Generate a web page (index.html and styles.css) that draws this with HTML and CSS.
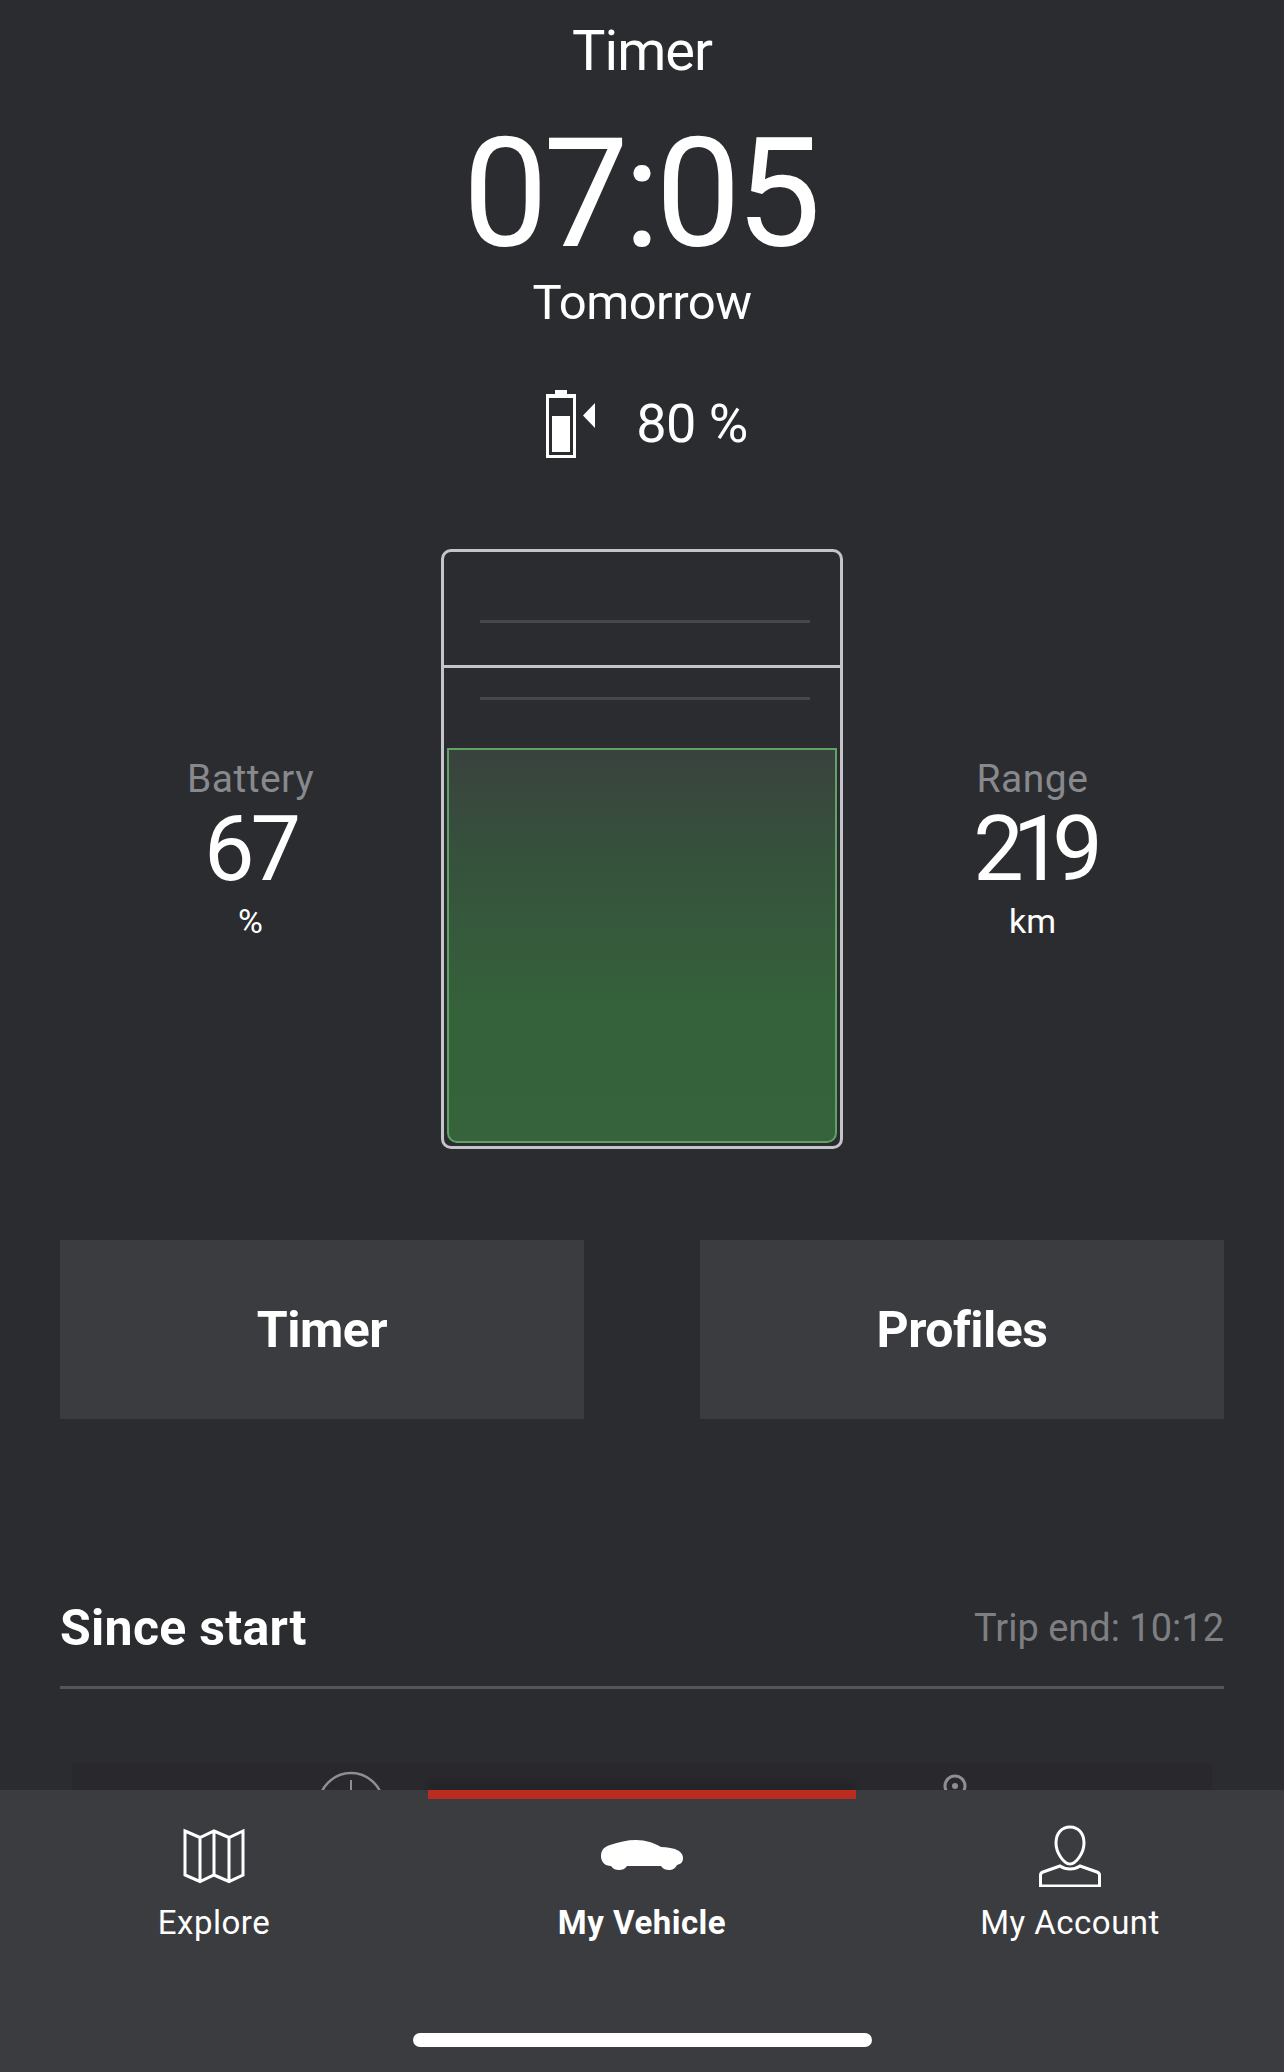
FILE: index.html
```html
<!DOCTYPE html>
<html lang="en">
<head>
<meta charset="utf-8">
<title>My Vehicle</title>
<link rel="stylesheet" href="styles.css">
</head>
<body>
<div class="screen">
  <main class="content">
    <section class="timer">
      <h1 class="timer-title">Timer</h1>
      <div class="timer-time">07:05</div>
      <div class="timer-day">Tomorrow</div>
      <div class="target">
        <svg class="target-icon" width="50" height="68" viewBox="0 0 50 68" aria-hidden="true">
          <path fill="#fff" d="M9 0h12v4h9v64h-30v-64h9z"/>
          <rect x="3" y="8" width="24" height="57" fill="#2b2c30"/>
          <rect x="6" y="26" width="18" height="36" fill="#fff"/>
          <path fill="#fff" d="M49 13v25l-12-12.500z"/>
        </svg>
        <span class="target-value">80 %</span>
      </div>
    </section>

    <section class="gauge-row">
      <div class="stat stat-left">
        <div class="stat-label">Battery</div>
        <div class="stat-value">67</div>
        <div class="stat-unit">%</div>
      </div>
      <div class="gauge">
        <div class="gauge-top"><div class="tick"></div></div>
        <div class="gauge-bottom">
          <div class="tick tick-low"></div>
          <div class="gauge-fill"></div>
        </div>
      </div>
      <div class="stat stat-right">
        <div class="stat-label">Range</div>
        <div class="stat-value stat-value-tight">219</div>
        <div class="stat-unit">km</div>
      </div>
    </section>

    <section class="actions">
      <div class="action">Timer</div>
      <div class="action">Profiles</div>
    </section>

    <section class="trip">
      <div class="trip-head">
        <h2 class="trip-title">Since start</h2>
        <span class="trip-end">Trip end: 10:12</span>
      </div>
      <div class="trip-card">
        <svg class="peek" width="70" height="70" viewBox="0 0 70 70" aria-hidden="true">
          <circle cx="35" cy="35" r="32" fill="none" stroke="#8e8f92" stroke-width="2.500"/>
          <path d="M35 10v24" stroke="#8e8f92" stroke-width="2"/>
        </svg>
        <svg class="peek peek-pin" width="28" height="60" viewBox="0 0 28 60" aria-hidden="true">
          <circle cx="14" cy="14" r="10" fill="none" stroke="#8e8f92" stroke-width="3"/>
          <circle cx="14" cy="14" r="3" fill="#8e8f92"/>
        </svg>
      </div>
    </section>
  </main>

  <nav class="tabbar">
    <div class="tabs">
      <div class="tab">
        <svg class="tab-icon" width="62" height="56" viewBox="0 0 62 56" aria-hidden="true">
          <path fill="none" stroke="#fff" stroke-width="3" d="M2 3l15 6.500 14-6.500 15 6.500 14-6.500v44l-14 6.500-15-6.500-14 6.500-15-6.500zM17 9.500v44M31 3v44M46 9.500v44"/>
        </svg>
        <span class="tab-label">Explore</span>
      </div>
      <div class="tab tab-active">
        <svg class="tab-icon" width="84" height="56" viewBox="0 -4 84 56" aria-hidden="true">
          <path fill="#fff" d="M1 24c0-6 3-9 9-11 9-3 17-5 26-5 10 0 18 3 25 7 6 0 13 1 18 4 3 2 4 5 4 7 0 4-2 6-6 7-2 4-5 5-8 5s-6-1-8-4h-34c-2 3-5 4-8 4s-6-1-8-4c-6 0-10-4-10-10z"/>
        </svg>
        <span class="tab-label">My Vehicle</span>
      </div>
      <div class="tab">
        <svg class="tab-icon" width="62" height="62" viewBox="0 0 62 62" aria-hidden="true">
          <path fill="none" stroke="#fff" stroke-width="3" d="M31 2c8 0 14 6 14 16 0 10-8 21-14 21s-14-11-14-21c0-10 6-16 14-16z"/>
          <path fill="none" stroke="#fff" stroke-width="3" stroke-linejoin="miter" d="M21 41l-17 6c-1.500 .6-2.500 1.500-2.500 3v11h59v-11c0-1.500-1-2.400-2.500-3l-17-6c-3 2-6 3-10 3s-7-1-10-3z"/>
        </svg>
        <span class="tab-label">My Account</span>
      </div>
    </div>
    <div class="home-indicator"></div>
  </nav>
</div>
</body>
</html>
```
FILE: styles.css
```css
* { box-sizing: border-box; }
html, body { margin: 0; padding: 0; background: #2b2c30; }
body { font-family: Roboto, "Liberation Sans", sans-serif; color: #fff; }
h1, h2 { margin: 0; font: inherit; }

.screen {
  width: 1284px;
  height: 2072px;
  display: flex;
  flex-direction: column;
  overflow: hidden;
  background: #2b2c30;
}
.content {
  height: 1790px;
  flex: none;
  overflow: hidden;
  display: flex;
  flex-direction: column;
}
.content > section { flex: none; }

/* timer */
.timer { display: flex; flex-direction: column; align-items: center; padding-top: 17px; }
.timer-title { font-size: 56px; line-height: 68px; font-weight: 400; letter-spacing: -1px; }
.timer-time { font-size: 152px; line-height: 150px; font-weight: 400; letter-spacing: -5px; margin: 34px 5px 0 0; }
.timer-day { font-size: 49px; line-height: 60px; font-weight: 400; letter-spacing: -.5px; margin-top: 4px; }
.target { display: flex; align-items: center; gap: 40px; margin: 55px 0 0 10px; height: 72px; }
.target-value { font-size: 54px; font-weight: 400; line-height: 60px; letter-spacing: -.5px; }

/* gauge */
.gauge-row {
  display: grid;
  grid-template-columns: 441px 402px 441px;
  margin-top: 89px;
  height: 600px;
}
.stat { display: flex; flex-direction: column; align-items: center; justify-content: center; }
.stat-left { padding-left: 60px; }
.stat-right { padding-right: 62px; }
.stat-label { font-size: 39px; line-height: 46px; color: #88898c; font-weight: 400; letter-spacing: .5px; margin-bottom: 3px; }
.stat-value { font-size: 90px; line-height: 90px; font-weight: 400; letter-spacing: -4px; }
.stat-value-tight { letter-spacing: -11px; }
.stat-unit { font-size: 34px; line-height: 44px; font-weight: 400; margin-top: 4px; }

.gauge {
  border: 3px solid #c4c5c9;
  border-radius: 10px;
  display: flex;
  flex-direction: column;
}
.gauge-top { height: 116px; flex: none; border-bottom: 3px solid #c4c5c9; padding-top: 68px; }
.gauge-bottom { flex: 1; display: flex; flex-direction: column; padding-top: 29px; }
.tick { height: 3px; width: 330px; margin-left: 36px; background: #47484c; }
.gauge-fill {
  margin: 48px 3px 3px;
  flex: 1;
  border: 2px solid #62a267;
  border-radius: 0 0 10px 10px;
  background: linear-gradient(180deg, #3a423e 0%, #36503c 25%, #35613b 65%, #36633b 100%);
}

/* actions */
.actions {
  display: flex;
  justify-content: space-between;
  padding: 0 60px;
  margin-top: 91px;
}
.action {
  width: 524px;
  height: 179px;
  background: #3b3c40;
  display: flex;
  align-items: center;
  justify-content: center;
  font-size: 50px;
  font-weight: 700;
  letter-spacing: -.5px;
}

/* trip */
.trip { padding: 0 60px; margin-top: 167px; }
.trip-head {
  display: flex;
  justify-content: space-between;
  align-items: center;
  height: 103px;
  padding-bottom: 16px;
  border-bottom: 3px solid #55565a;
}
.trip-title { font-size: 50px; font-weight: 700; line-height: 60px; letter-spacing: .3px; }
.trip-end { font-size: 38px; font-weight: 400; color: #7e7f83; }
.trip-card {
  position: relative;
  margin: 74px 12px 0;
  height: 200px;
  background: #29292d;
}
.peek { position: absolute; top: 7px; left: 244px; }
.peek-pin { top: 9px; left: 869px; }

/* tab bar */
.tabbar {
  flex: 1;
  background: #3b3c40;
  display: flex;
  flex-direction: column;
  position: relative;
}
.tabbar::before {
  content: "";
  position: absolute;
  top: 0;
  left: 428px;
  width: 428px;
  height: 9px;
  background: #bb2c20;
  box-shadow: 0 -8px 6px rgba(0, 0, 0, .12);
}
.tabs { display: grid; grid-template-columns: 428px 428px 428px; height: 243px; }
.tab { display: flex; flex-direction: column; align-items: center; padding-top: 35px; }
.tab-icon { height: 62px; display: block; }
.tab-label { margin-top: 14px; font-size: 33px; line-height: 44px; font-weight: 400; letter-spacing: .5px; }
.tab-active .tab-label { font-weight: 700; letter-spacing: .5px; }
.home-indicator { width: 459px; height: 14px; border-radius: 7px; background: #fff; margin: 0 auto; }
```
